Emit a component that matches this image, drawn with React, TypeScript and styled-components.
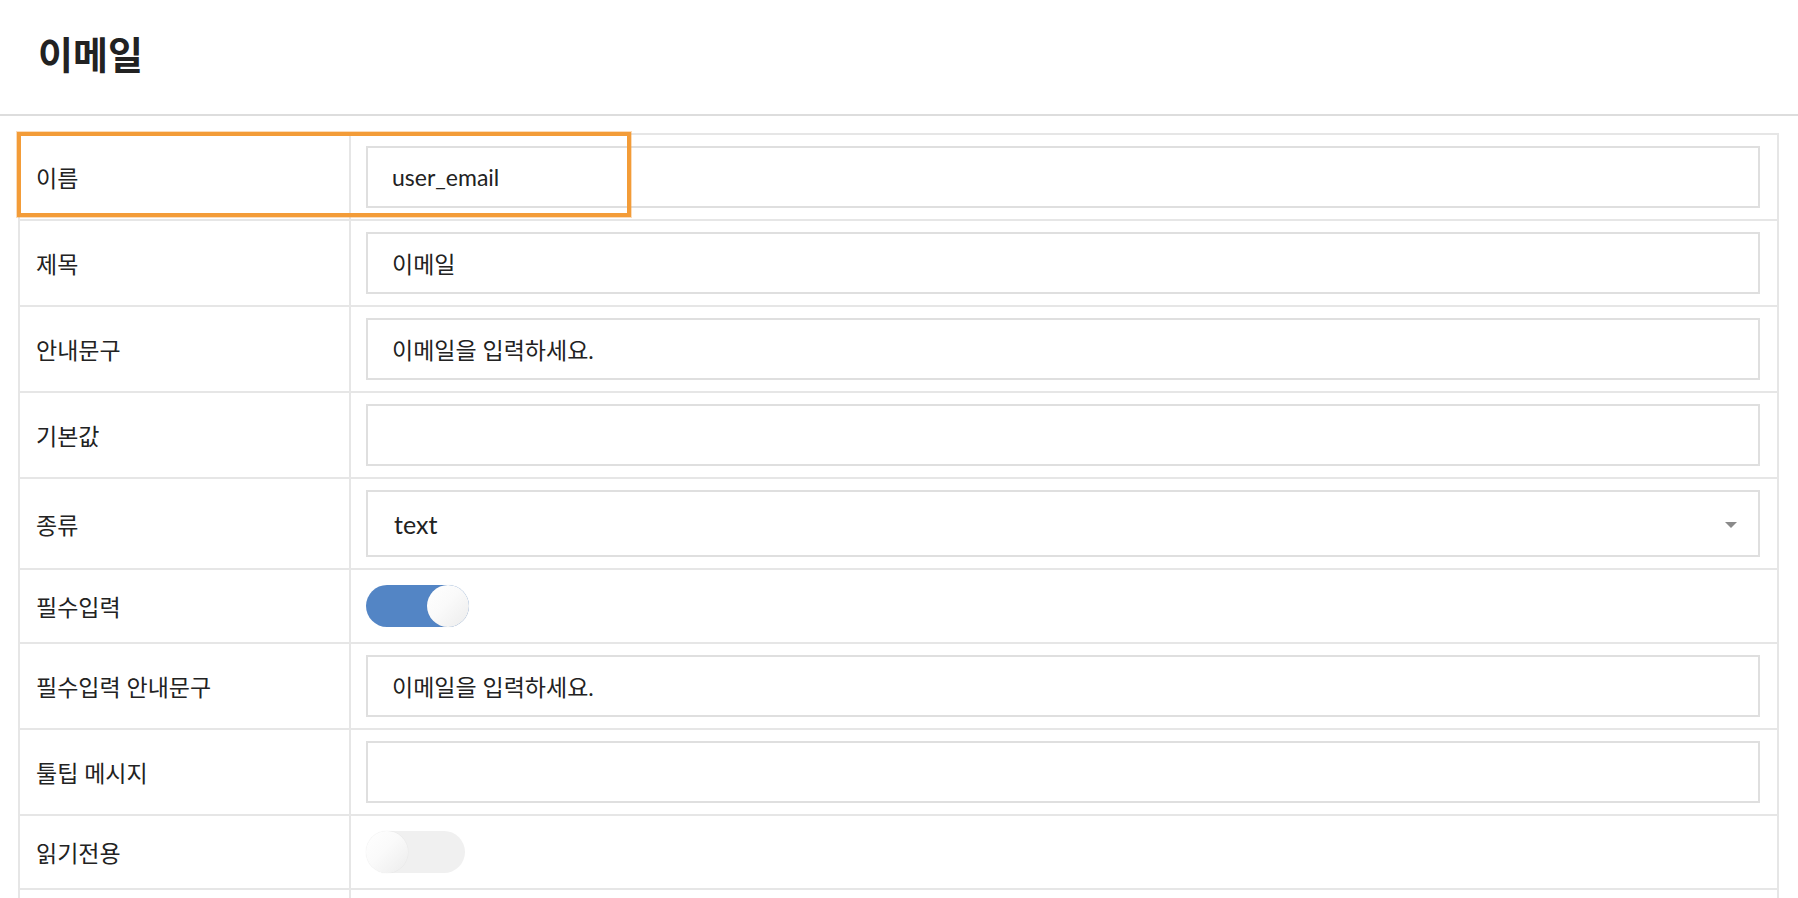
import React from "react";
import styled, { createGlobalStyle } from "styled-components";

const GlobalStyle = createGlobalStyle`
  html, body { margin: 0; padding: 0; background: #ffffff; }
  body {
    font-family: Lato, "Noto Sans CJK KR", sans-serif;
    color: #222222;
    overflow: hidden;
  }
  * { box-sizing: border-box; }
`;

const Page = styled.div`
  width: 1798px;
  height: 898px;
  overflow: hidden;
  background: #ffffff;
`;

const Header = styled.header`
  height: 116px;
  display: flex;
  align-items: center;
  padding: 0 0 10px 38px;
  border-bottom: 2px solid #dddddd;
`;

const Title = styled.h1`
  margin: 0;
  font-family: Lato, "Noto Sans CJK KR", sans-serif;
  font-size: 38px;
  font-weight: 700;
  color: #222222;
`;

const Table = styled.div`
  position: relative;
  margin: 17px 19px 0 18px;
  border: 2px solid #e6e6e6;
  border-bottom: none;
`;

const Highlight = styled.div`
  position: absolute;
  left: -3px;
  top: -3px;
  width: 614px;
  height: 85px;
  border: 4px solid #f39c38;
  box-shadow: 0 0 0 1px rgba(243, 156, 56, 0.35);
  pointer-events: none;
`;

const Row = styled.div`
  display: grid;
  grid-template-columns: 331px 1fr;
  border-bottom: 2px solid #e6e6e6;
`;

const LabelCell = styled.div`
  display: flex;
  align-items: center;
  padding-left: 16px;
  border-right: 2px solid #e6e6e6;
  font-size: 23px;
  color: #222222;
`;

const FieldCell = styled.div<{ $pad: number }>`
  display: flex;
  align-items: center;
  padding: ${(p) => p.$pad}px 17px ${(p) => p.$pad}px 15px;
`;

const TextInput = styled.input`
  width: 100%;
  height: 62px;
  border: 2px solid #dfdfdf;
  border-radius: 0;
  padding: 0 24px;
  font-family: Lato, "Noto Sans CJK KR", sans-serif;
  font-size: 23px;
  color: #222222;
  background: #ffffff;
  outline: none;
`;

const SelectWrap = styled.div`
  position: relative;
  width: 100%;
`;

const Select = styled.select`
  width: 100%;
  height: 67px;
  border: 2px solid #dfdfdf;
  border-radius: 0;
  padding: 0 26px;
  font-family: Lato, "Noto Sans CJK KR", sans-serif;
  font-size: 25px;
  color: #222222;
  background: #ffffff;
  appearance: none;
  -webkit-appearance: none;
  outline: none;
`;

const Caret = styled.span`
  position: absolute;
  right: 23px;
  top: 50%;
  margin-top: -2px;
  width: 0;
  height: 0;
  border-left: 6px solid transparent;
  border-right: 6px solid transparent;
  border-top: 6px solid #8a8a8a;
  pointer-events: none;
`;

const Track = styled.button<{ $on: boolean }>`
  display: flex;
  justify-content: ${(p) => (p.$on ? "flex-end" : "flex-start")};
  align-items: center;
  width: ${(p) => (p.$on ? 103 : 99)}px;
  height: 42px;
  padding: 0;
  border: none;
  border-radius: 21px;
  background: ${(p) => (p.$on ? "#5385c5" : "#f0f0f0")};
  cursor: pointer;
`;

const Knob = styled.span`
  width: 42px;
  height: 42px;
  border-radius: 50%;
  background: linear-gradient(135deg, #ffffff 0%, #fafafa 45%, #ececec 100%);
  box-shadow: 0 0 1px rgba(0, 0, 0, 0.12);
`;

type Field =
  | { label: string; kind: "text"; value: string }
  | { label: string; kind: "select"; value: string }
  | { label: string; kind: "toggle"; on: boolean };

const fields: Field[] = [
  { label: "이름", kind: "text", value: "user_email" },
  { label: "제목", kind: "text", value: "이메일" },
  { label: "안내문구", kind: "text", value: "이메일을 입력하세요." },
  { label: "기본값", kind: "text", value: "" },
  { label: "종류", kind: "select", value: "text" },
  { label: "필수입력", kind: "toggle", on: true },
  { label: "필수입력 안내문구", kind: "text", value: "이메일을 입력하세요." },
  { label: "툴팁 메시지", kind: "text", value: "" },
  { label: "읽기전용", kind: "toggle", on: false },
  { label: "", kind: "toggle", on: false },
];

function Toggle({ on }: { on: boolean }) {
  return (
    <Track $on={on} type="button" aria-pressed={on}>
      <Knob />
    </Track>
  );
}

export default function App() {
  return (
    <Page>
      <GlobalStyle />
      <Header>
        <Title>이메일</Title>
      </Header>
      <Table>
        <Highlight />
        {fields.map((f, i) => (
          <Row key={i}>
            <LabelCell>{f.label}</LabelCell>
            {f.kind === "text" && (
              <FieldCell $pad={11}>
                <TextInput readOnly value={f.value} />
              </FieldCell>
            )}
            {f.kind === "select" && (
              <FieldCell $pad={11}>
                <SelectWrap>
                  <Select value={f.value} onChange={() => {}}>
                    <option value="text">text</option>
                    <option value="email">email</option>
                  </Select>
                  <Caret />
                </SelectWrap>
              </FieldCell>
            )}
            {f.kind === "toggle" && (
              <FieldCell $pad={15}>
                <Toggle on={f.on} />
              </FieldCell>
            )}
          </Row>
        ))}
      </Table>
    </Page>
  );
}
